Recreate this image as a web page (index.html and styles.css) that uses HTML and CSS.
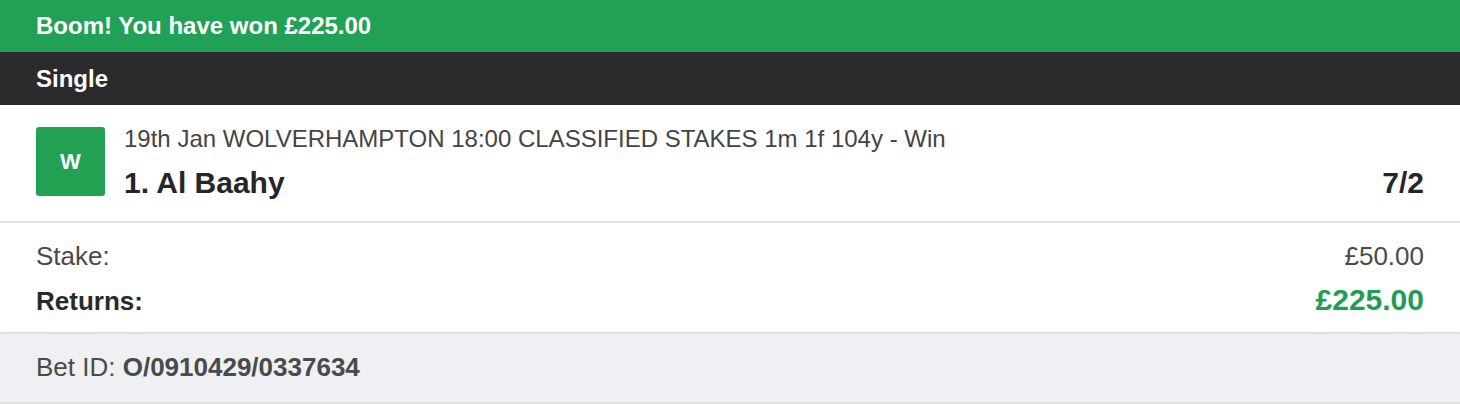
FILE: index.html
```html
<!DOCTYPE html>
<html>
<head>
<meta charset="utf-8">
<link rel="stylesheet" href="styles.css">
</head>
<body>
<div class="receipt">
  <div class="banner">Boom! You have won £225.00</div>
  <div class="type">Single</div>
  <div class="selection">
    <div class="badge">W</div>
    <div class="sel-info">
      <div class="event">19th Jan WOLVERHAMPTON 18:00 CLASSIFIED STAKES 1m 1f 104y - Win</div>
      <div class="name-row">
        <span class="runner">1. Al Baahy</span>
        <span class="odds">7/2</span>
      </div>
    </div>
  </div>
  <div class="totals">
    <div class="row stake"><span>Stake:</span><span>£50.00</span></div>
    <div class="row returns"><span>Returns:</span><span class="win">£225.00</span></div>
  </div>
  <div class="betid">Bet ID:&nbsp;<b>O/0910429/0337634</b></div>
</div>
</body>
</html>
```
FILE: styles.css
```css
html, body {
  margin: 0;
  padding: 0;
  background: #ffffff;
}
body {
  font-family: "Liberation Sans", Arial, sans-serif;
  color: #444;
}
.receipt {
  width: 1460px;
}
.banner {
  background: #21a155;
  color: #fff;
  font-weight: bold;
  font-size: 24px;
  height: 52px;
  padding: 0 36px;
  display: flex;
  align-items: center;
}
.type {
  background: #2b2a2c;
  color: #fff;
  font-weight: bold;
  font-size: 24px;
  height: 53px;
  padding: 0 36px;
  display: flex;
  align-items: center;
}
.selection {
  display: flex;
  padding: 22px 36px 0 36px;
  box-sizing: border-box;
  height: 118px;
  border-bottom: 2px solid #e3e4e6;
}
.badge {
  width: 69px;
  height: 69px;
  background: #22a153;
  border-radius: 3px;
  color: #fff;
  font-weight: bold;
  font-size: 22px;
  display: flex;
  align-items: center;
  justify-content: center;
  flex-shrink: 0;
}
.sel-info {
  flex: 1;
  margin-left: 19px;
}
.event {
  font-size: 24px;
  color: #444;
  line-height: 28px;
  margin-top: -2px;
}
.name-row {
  display: flex;
  justify-content: space-between;
  align-items: baseline;
  margin-top: 12px;
  font-weight: bold;
  font-size: 30px;
  line-height: 36px;
  color: #262626;
}
.totals {
  padding: 16px 36px 0 36px;
  height: 109px;
  box-sizing: border-box;
  box-shadow: 0 1px 2px rgba(0,0,0,0.15);
  position: relative;
}
.row {
  display: flex;
  justify-content: space-between;
  align-items: baseline;
}
.stake {
  font-size: 26px;
  color: #4a4a4a;
  line-height: 34px;
}
.returns {
  font-size: 26px;
  font-weight: bold;
  color: #2a2a2a;
  margin-top: 10px;
  line-height: 34px;
}
.returns .win {
  color: #1f9d52;
  font-size: 30px;
}
.betid {
  background: #eef0f3;
  height: 70px;
  padding: 0 36px;
  display: flex;
  align-items: center;
  font-size: 26px;
  color: #4a4a4a;
  border-bottom: 2px solid #e2e3e5;
}
```
